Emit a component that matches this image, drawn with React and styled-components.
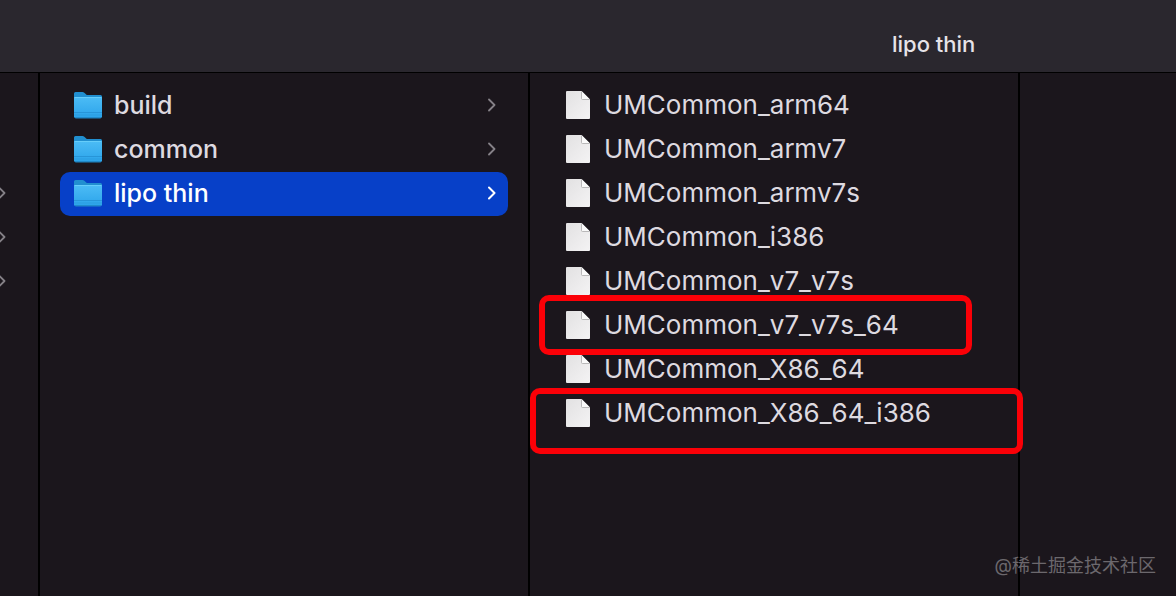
import React from "react";
import styled, { createGlobalStyle } from "styled-components";

const GlobalStyle = createGlobalStyle`
  * { box-sizing: border-box; }
  body {
    margin: 0;
    background: #1b161c;
    color: #dedae0;
    font-family: Inter, "Noto Sans CJK SC", sans-serif;
    font-kerning: none;
  }
`;

const Finder = styled.div`
  position: relative;
  display: flex;
  flex-direction: column;
  min-height: 100vh;
  overflow: hidden;
`;

const TitleBar = styled.header`
  display: flex;
  justify-content: flex-end;
  padding-top: 30px;
  height: 73px;
  background: #2a272e;
  border-bottom: 1px solid #000;
`;

const Title = styled.h1`
  margin: 0;
  width: 284px;
  font-size: 22px;
  line-height: 28px;
  font-weight: 500;
  color: #e6e3e8;
`;

const Columns = styled.main`
  display: flex;
  flex: 1;
`;

const Column = styled.ul`
  flex: none;
  width: ${(p) => (p.$narrow ? "40px" : "490px")};
  margin: 0;
  padding: ${(p) => (p.$narrow ? "11px 32px 0 0" : "11px 20px 0")};
  list-style: none;
  border-right: 2px solid #000;
`;

const PreviewColumn = styled.section`
  flex: 1;
`;

const Row = styled.li`
  position: relative;
  display: flex;
  align-items: center;
  justify-content: ${(p) => (p.$end ? "flex-end" : "flex-start")};
  gap: 12px;
  height: 44px;
  padding: ${(p) => (p.$end ? "0 0 2px" : "0 12px 2px 14px")};
  border-radius: 10px;
  background: ${(p) => (p.$selected ? "#0740c8" : "transparent")};
  color: ${(p) => (p.$selected ? "#fff" : "inherit")};
`;

const Name = styled.span`
  flex: 1;
  font-size: ${(p) => (p.$folder ? "25px" : "26px")};
  line-height: 32px;
  font-weight: ${(p) => (p.$folder ? 500 : 400)};
  white-space: nowrap;
`;

const Icon = styled.svg`
  display: block;
  flex: none;
`;

const Highlight = styled.span`
  position: absolute;
  z-index: 1;
  inset: ${(p) => p.$inset};
  border: 6px solid #fb0007;
  border-radius: 10px;
  pointer-events: none;
`;

const Watermark = styled.footer`
  position: absolute;
  right: 20px;
  bottom: 18px;
  font-size: 18px;
  line-height: 24px;
  color: #6c686d;
`;

function FolderIcon() {
  return (
    <Icon width="28" height="28" viewBox="0 0 28 28" aria-hidden="true">
      <defs>
        <linearGradient id="folderFront" x1="0" y1="0" x2="0" y2="1">
          <stop offset="0" stopColor="#4cbcf5" />
          <stop offset="1" stopColor="#2ba3ea" />
        </linearGradient>
      </defs>
      <path d="M0 2.5Q0 1 1.5 1H8.5Q9.5 1 10.3 1.7L12.8 4H26.5Q28 4 28 5.5V12H0Z" fill="#218fd0" />
      <path d="M0 7Q0 6 1.2 6H26.8Q28 6 28 7V25.5Q28 27.3 26 27.3H2Q0 27.3 0 25.5Z" fill="url(#folderFront)" />
      <path d="M.5 6.5H27.5" stroke="#66cdfa" />
      <path d="M0 21.5H28" stroke="#2795d8" />
      <path d="M0 24H28" stroke="#2c9de0" />
      <path d="M1 26.8H27" stroke="#1c7fbd" />
    </Icon>
  );
}

function FileIcon() {
  return (
    <Icon width="28" height="28" viewBox="0 0 28 28" aria-hidden="true">
      <defs>
        <linearGradient id="paper" x1="0" y1="0" x2="1" y2="1">
          <stop offset="0" stopColor="#e2e1e2" />
          <stop offset="1" stopColor="#f4f3f4" />
        </linearGradient>
      </defs>
      <path d="M3 0H17.5L26 8.5V27Q26 28 25 28H3Q2 28 2 27V1Q2 0 3 0Z" fill="url(#paper)" />
      <path d="M17.5 0L26 8.5H18.5Q17.5 8.5 17.5 7.5Z" fill="#fafafa" />
      <path d="M17.5 .5V7.5Q17.5 8.5 18.5 8.5H25.5" fill="none" stroke="#aaa8aa" strokeWidth=".8" />
    </Icon>
  );
}

function Chevron({ bright }) {
  return (
    <Icon width="8" height="14" viewBox="0 0 8 14" aria-hidden="true">
      <path
        d="M1 1.5L6.5 7L1 12.5"
        fill="none"
        stroke={bright ? "#fff" : "#858187"}
        strokeWidth={bright ? 2 : 1.8}
        strokeLinecap="round"
        strokeLinejoin="round"
      />
    </Icon>
  );
}

const parentRows = [false, false, true, true, true];

const folders = [
  { name: "build" },
  { name: "common" },
  { name: "lipo thin", selected: true },
];

const files = [
  { name: "UMCommon_arm64" },
  { name: "UMCommon_armv7" },
  { name: "UMCommon_armv7s" },
  { name: "UMCommon_i386" },
  { name: "UMCommon_v7_v7s" },
  { name: "UMCommon_v7_v7s_64", highlight: "-9px 26px -7px -11px" },
  { name: "UMCommon_X86_64" },
  { name: "UMCommon_X86_64_i386", highlight: "-4px -25px -18px -20px" },
];

export default function App() {
  return (
    <>
      <GlobalStyle />
      <Finder>
        <TitleBar>
          <Title>lipo thin</Title>
        </TitleBar>
        <Columns>
          <Column $narrow>
            {parentRows.map((isFolder, i) => (
              <Row key={i} $end>
                {isFolder && <Chevron />}
              </Row>
            ))}
          </Column>
          <Column>
            {folders.map((f) => (
              <Row key={f.name} $selected={f.selected}>
                <FolderIcon />
                <Name $folder>{f.name}</Name>
                <Chevron bright={f.selected} />
              </Row>
            ))}
          </Column>
          <Column>
            {files.map((f) => (
              <Row key={f.name}>
                <FileIcon />
                <Name>{f.name}</Name>
                {f.highlight && <Highlight $inset={f.highlight} />}
              </Row>
            ))}
          </Column>
          <PreviewColumn />
        </Columns>
        <Watermark>@稀土掘金技术社区</Watermark>
      </Finder>
    </>
  );
}
